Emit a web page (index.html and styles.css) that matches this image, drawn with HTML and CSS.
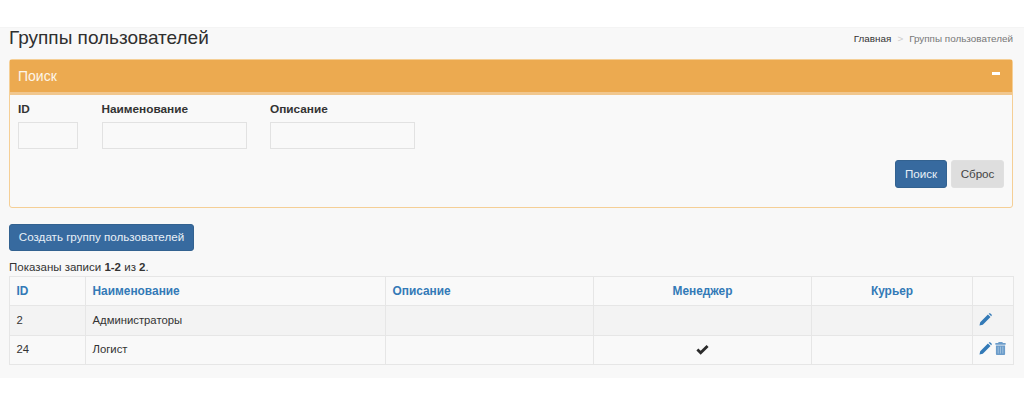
FILE: index.html
```html
<!DOCTYPE html>
<html lang="ru">
<head>
<meta charset="utf-8">
<title>Группы пользователей</title>
<link rel="stylesheet" href="styles.css">
</head>
<body>
<main class="page">
  <header class="page-head">
    <h1>Группы пользователей</h1>
    <nav class="crumbs"><a href="#">Главная</a><span class="sep">&gt;</span><span>Группы пользователей</span></nav>
  </header>
  <section class="panel">
    <div class="panel-head"><span>Поиск</span><span class="collapse"></span></div>
    <form class="panel-body">
      <div class="fields">
        <label class="field"><span>ID</span><input class="input-id" type="text"></label>
        <label class="field"><span>Наименование</span><input class="input-wide" type="text"></label>
        <label class="field"><span>Описание</span><input class="input-wide" type="text"></label>
      </div>
      <div class="actions">
        <button class="btn btn-primary btn-search" type="button">Поиск</button>
        <button class="btn btn-grey" type="button">Сброс</button>
      </div>
    </form>
  </section>
  <button class="btn btn-primary btn-create" type="button">Создать группу пользователей</button>
  <p class="summary">Показаны записи <b>1-2</b> из <b>2</b>.</p>
  <table class="grid">
    <colgroup>
      <col class="c1"><col class="c2"><col class="c3"><col class="c4"><col class="c5"><col class="c6">
    </colgroup>
    <thead>
      <tr><th>ID</th><th>Наименование</th><th>Описание</th><th class="mid">Менеджер</th><th class="mid">Курьер</th><th></th></tr>
    </thead>
    <tbody>
      <tr class="odd"><td>2</td><td>Администраторы</td><td></td><td></td><td></td>
        <td class="icons"><svg class="ico" viewBox="0 0 14 14"><path d="M0.5 13.5 L1.3 9.9 L9.6 1.6 L12.4 4.4 L4.1 12.7 Z M10.4 0.8 L11.2 0.3 Q11.8 0 12.3 0.5 L13.5 1.7 Q14 2.2 13.7 2.8 L13.2 3.6 Z" fill="#337ab7"/></svg></td></tr>
      <tr><td>24</td><td>Логист</td><td></td><td class="mid"><svg class="check" viewBox="0 0 14 11"><path d="M0.3 6 L2.4 3.9 L5 6.4 L11.5 0 L13.7 2.1 L5 10.8 Z" fill="#2b2b2b"/></svg></td><td></td>
        <td class="icons"><svg class="ico" viewBox="0 0 14 14"><path d="M0.5 13.5 L1.3 9.9 L9.6 1.6 L12.4 4.4 L4.1 12.7 Z M10.4 0.8 L11.2 0.3 Q11.8 0 12.3 0.5 L13.5 1.7 Q14 2.2 13.7 2.8 L13.2 3.6 Z" fill="#337ab7"/></svg><svg class="ico trash" viewBox="0 0 12 14"><path d="M4 0 H8 L8.6 1 H11.6 V2.8 H0.4 V1 H3.4 Z M1 3.6 H11 V13 Q11 14 10 14 H2 Q1 14 1 13 Z" fill="#6b9cca"/><path d="M3.5 5 V12.5 M6 5 V12.5 M8.5 5 V12.5" stroke="#a9c6e0" stroke-width="0.9"/></svg></td></tr>
    </tbody>
  </table>
</main>
</body>
</html>
```
FILE: styles.css
```css
* { box-sizing: border-box; }
html, body { margin: 0; padding: 0; background: #fff; }
body {
  padding-top: 27px;
  font-family: "Liberation Sans", Arial, sans-serif;
  font-size: 12px;
  color: #333;
}
.page {
  background: #f8f8f8;
  height: 351px;
  padding: 0 11px 0 9px;
  border-top: 1px solid #f4f4f4;
}
.page-head {
  display: flex;
  justify-content: space-between;
  align-items: flex-start;
  height: 31px;
}
h1 {
  margin: 0;
  font-size: 19px;
  line-height: 20px;
  font-weight: 400;
  color: #2f2f2f;
}
.crumbs {
  display: flex;
  padding-top: 5px;
  font-size: 9.9px;
  line-height: 11px;
  color: #777;
}
.crumbs a { color: #333; text-decoration: none; }
.sep { margin: 0 6px; color: #ccc; }
.panel {
  height: 149px;
  border: 1px solid #f5cf96;
  border-radius: 3px;
  background: #f9f9f9;
}
.panel-head {
  display: flex;
  justify-content: space-between;
  align-items: center;
  height: 35px;
  padding: 0 0 0 8px;
  background: #ecaa50;
  border-bottom: 3px solid #f1c78e;
  color: #fdf6ea;
  font-size: 14px;
}
.collapse {
  width: 8px;
  height: 3px;
  margin: 0 12px 6px 0;
  background: #fff;
}
.panel-body { padding: 7px 8px 0 8px; }
.fields { display: flex; gap: 23.5px; }
.field { display: flex; flex-direction: column; font-weight: 700; font-size: 11.8px; }
.field span { height: 20px; line-height: 14px; }
.field input {
  height: 27px;
  border: 1px solid #e2e2e2;
  background: #f9f9f9;
  padding: 0;
  margin: 0;
  border-radius: 0;
}
.input-id { width: 60px; }
.input-wide { width: 145px; }
.actions {
  display: flex;
  justify-content: flex-end;
  gap: 4px;
  margin-top: 11px;
}
.btn {
  width: 53px;
  height: 28px;
  padding: 0 0 2px;
  border: 1px solid transparent;
  border-radius: 3px;
  font-family: inherit;
  font-size: 11.6px;
}
.btn-search { width: 52px; }
.btn-primary { background: #376a9f; border-color: #336290; color: #e8f0f7; }
.btn-grey { background: #dedede; border-color: #e0e0e0; color: #444; }
.btn-create {
  display: block;
  width: 185px;
  height: 27px;
  margin-top: 16px;
}
.summary {
  margin: 9px 0 0;
  height: 16px;
  line-height: 14px;
  font-size: 11.5px;
}
.grid {
  width: 1004px;
  border-collapse: collapse;
  table-layout: fixed;
  font-size: 11.3px;
  background: #f9f9f9;
}
.c1 { width: 76px; }
.c2 { width: 300px; }
.c3 { width: 208px; }
.c4 { width: 218px; }
.c5 { width: 161px; }
.c6 { width: 41px; }
.grid th, .grid td {
  border: 1px solid #e6e6e6;
  padding: 0 6.5px;
  text-align: left;
}
.grid th { color: #337ab7; font-weight: 700; font-size: 11.9px; height: 29px; padding-bottom: 1px; }
.grid td { height: 30px; padding-bottom: 2px; }
.grid tbody tr:last-child td { height: 29px; }
.grid .mid { text-align: center; }
.odd td { background: #f3f3f3; }
.grid .icons { padding: 0 0 3px 6px; white-space: nowrap; line-height: 0; }
.ico { width: 13px; height: 13px; vertical-align: middle; }
.trash { width: 11px; margin-left: 3px; }
.check { width: 13px; height: 10px; vertical-align: middle; }
```
